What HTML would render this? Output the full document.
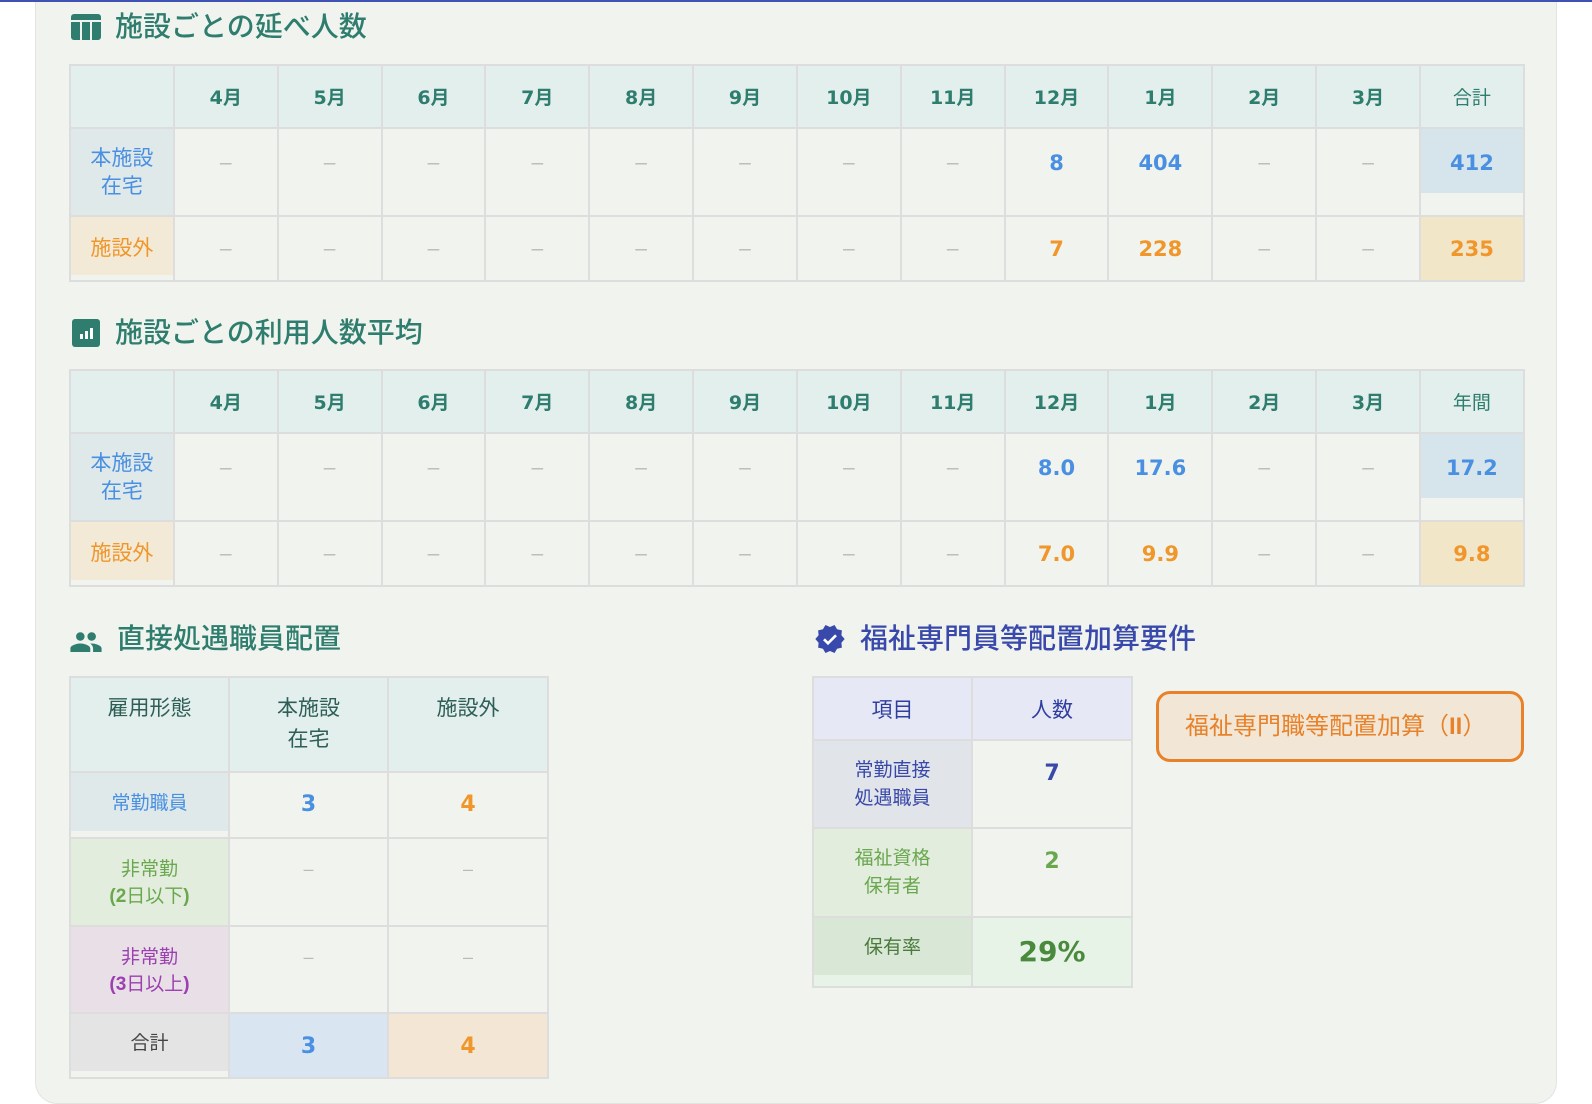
<!DOCTYPE html>
<html><head><meta charset="utf-8"><style>
*{box-sizing:border-box;margin:0;padding:0}
body{width:1592px;height:1088px;background:#fff;position:relative;overflow:hidden;font-family:"Liberation Sans","Noto Sans CJK JP",sans-serif}
.topline{position:absolute;left:0;top:0;width:1592px;height:2px;background:#3f51b5;z-index:5}
.card{position:absolute;left:35px;top:0;width:1522px;height:1104px;background:#f1f4ee;border:1px solid #e2e4e0;border-top:none;border-radius:0 0 22px 22px}
.title{position:absolute;font-size:28px;font-weight:500;color:#2e7d6e;display:flex;align-items:center;gap:14px;line-height:34px;white-space:nowrap}
.title svg{display:block}
table{position:absolute;border-collapse:collapse;table-layout:fixed}
td{border:2px solid #dddddd;text-align:center;vertical-align:top;padding:0}
.m td{font-size:21px}
.m tr.h td{background:#e2efed;color:#2e7d6e;font-weight:bold;vertical-align:middle;font-family:"DejaVu Sans","Noto Sans CJK JP",sans-serif;font-size:19px}
.m .r1 td{padding-top:20px;line-height:28px}
.m .r2 td{vertical-align:middle;line-height:28px}
.lbl{font-size:19px;font-weight:normal}
.dash{color:#bbb;font-size:18px}
.b,.o,.n{font-family:"DejaVu Sans",sans-serif;font-weight:bold;font-size:22px}
.b{color:#4a90e2}
.o{color:#f0962a}
</style></head><body>
<div class="topline"></div>
<div class="card"></div>

<div class="title" style="left:71px;top:10px">
<svg width="30" height="30" viewBox="0 0 30 30"><rect x="0" y="2" width="30" height="26" rx="3" fill="#2e7d6e"/><rect x="9" y="9" width="2" height="19" fill="#f1f4ee"/><rect x="19" y="9" width="2" height="19" fill="#f1f4ee"/><rect x="0" y="8" width="30" height="2" fill="#f1f4ee"/></svg>
<span>施設ごとの延べ人数</span></div>

<table class="m" style="left:69px;top:64px;width:1454px">
<colgroup><col span="14" style="width:103.85px"></colgroup>
<tr class="h" style="height:63px"><td></td><td>4月</td><td>5月</td><td>6月</td><td>7月</td><td>8月</td><td>9月</td><td>10月</td><td>11月</td><td>12月</td><td>1月</td><td>2月</td><td>3月</td><td style="font-weight:normal">合計</td></tr>
<tr class="r1" style="height:88px"><td class="lbl" style="background:#dfe9ea;color:#4a90e2;padding-top:16px">本施設<br>在宅</td><td class="dash">–</td><td class="dash">–</td><td class="dash">–</td><td class="dash">–</td><td class="dash">–</td><td class="dash">–</td><td class="dash">–</td><td class="dash">–</td><td class="b">8</td><td class="b">404</td><td class="dash">–</td><td class="dash">–</td><td class="b" style="background:linear-gradient(#d6e4ec 64px,transparent 0)">412</td></tr>
<tr class="r2" style="height:65px"><td class="lbl" style="background:linear-gradient(#f2ead6 calc(100% - 5px),transparent 0);color:#f0962a">施設外</td><td class="dash">–</td><td class="dash">–</td><td class="dash">–</td><td class="dash">–</td><td class="dash">–</td><td class="dash">–</td><td class="dash">–</td><td class="dash">–</td><td class="o">7</td><td class="o">228</td><td class="dash">–</td><td class="dash">–</td><td class="o" style="background:#f2e6c9">235</td></tr>
</table>

<div class="title" style="left:71px;top:316px">
<svg width="30" height="30" viewBox="0 0 30 30"><rect x="1" y="1" width="28" height="28" rx="3" fill="#2e7d6e"/><rect x="9" y="16" width="3" height="5" fill="#fff"/><rect x="14" y="13" width="3" height="8" fill="#fff"/><rect x="19" y="10" width="3" height="11" fill="#fff"/></svg>
<span>施設ごとの利用人数平均</span></div>

<table class="m" style="left:69px;top:369px;width:1454px">
<colgroup><col span="14" style="width:103.85px"></colgroup>
<tr class="h" style="height:63px"><td></td><td>4月</td><td>5月</td><td>6月</td><td>7月</td><td>8月</td><td>9月</td><td>10月</td><td>11月</td><td>12月</td><td>1月</td><td>2月</td><td>3月</td><td style="font-weight:normal">年間</td></tr>
<tr class="r1" style="height:88px"><td class="lbl" style="background:#dfe9ea;color:#4a90e2;padding-top:16px">本施設<br>在宅</td><td class="dash">–</td><td class="dash">–</td><td class="dash">–</td><td class="dash">–</td><td class="dash">–</td><td class="dash">–</td><td class="dash">–</td><td class="dash">–</td><td class="b">8.0</td><td class="b">17.6</td><td class="dash">–</td><td class="dash">–</td><td class="b" style="background:linear-gradient(#d6e4ec 64px,transparent 0)">17.2</td></tr>
<tr class="r2" style="height:65px"><td class="lbl" style="background:linear-gradient(#f2ead6 calc(100% - 5px),transparent 0);color:#f0962a">施設外</td><td class="dash">–</td><td class="dash">–</td><td class="dash">–</td><td class="dash">–</td><td class="dash">–</td><td class="dash">–</td><td class="dash">–</td><td class="dash">–</td><td class="o">7.0</td><td class="o">9.9</td><td class="dash">–</td><td class="dash">–</td><td class="o" style="background:#f2e6c9">9.8</td></tr>
</table>

<div class="title" style="left:69px;top:622px">
<svg width="34" height="30" viewBox="0 0 24 21" style="margin-top:2px"><path fill="#2e7d6e" d="M16 11c1.66 0 2.99-1.34 2.99-3S17.66 5 16 5c-1.66 0-3 1.34-3 3s1.34 3 3 3zm-8 0c1.66 0 2.99-1.34 2.99-3S9.66 5 8 5C6.34 5 5 6.34 5 8s1.34 3 3 3zm0 2c-2.33 0-7 1.17-7 3.5V19h14v-2.5c0-2.33-4.67-3.5-7-3.5zm8 0c-.29 0-.62.02-.97.05 1.16.84 1.97 1.97 1.97 3.45V19h6v-2.5c0-2.33-4.67-3.5-7-3.5z"/></svg>
<span>直接処遇職員配置</span></div>

<table style="left:69px;top:676px;width:478px;font-size:19px">
<colgroup><col style="width:159px"><col style="width:159px"><col style="width:160px"></colgroup>
<tr style="height:95px"><td style="background:#e2efed;color:#2e5e55;font-size:21px;line-height:31px;padding-top:15px">雇用形態</td><td style="background:#e2efed;color:#2e5e55;font-size:21px;line-height:31px;padding-top:15px">本施設<br>在宅</td><td style="background:#e2efed;color:#2e5e55;font-size:21px;line-height:31px;padding-top:15px">施設外</td></tr>
<tr style="height:66px"><td style="background:linear-gradient(#dfe9ea calc(100% - 6px),transparent 0);color:#4a90e2;padding-top:17px;line-height:28px">常勤職員</td><td class="b" style="padding-top:18px;line-height:28px">3</td><td class="o" style="padding-top:18px;line-height:28px">4</td></tr>
<tr style="height:88px"><td style="background:#e3eddd;color:#6aa84f;padding-top:17px;line-height:27px">非常勤<br><b>(2</b>日以下<b>)</b></td><td class="dash" style="padding-top:20px">–</td><td class="dash" style="padding-top:20px">–</td></tr>
<tr style="height:87px"><td style="background:#e8dfe7;color:#9c3fb0;padding-top:17px;line-height:27px">非常勤<br><b>(3</b>日以上<b>)</b></td><td class="dash" style="padding-top:20px">–</td><td class="dash" style="padding-top:20px">–</td></tr>
<tr style="height:65px"><td style="background:linear-gradient(#e4e4e4 calc(100% - 6px),transparent 0);color:#444;padding-top:16px;line-height:28px">合計</td><td class="b" style="background:#d9e6f2;padding-top:19px;line-height:28px">3</td><td class="o" style="background:#f3e6d4;padding-top:19px;line-height:28px">4</td></tr>
</table>

<div class="title" style="left:814px;top:622px;color:#3949ab">
<svg width="32" height="32" viewBox="0 0 24 24"><path fill="#3949ab" d="M23 12l-2.44-2.79.34-3.69-3.61-.82-1.89-3.2L12 2.96 8.6 1.5 6.71 4.69 3.1 5.5l.34 3.7L1 12l2.44 2.79-.34 3.7 3.61.82L8.6 22.5l3.4-1.47 3.4 1.46 1.89-3.19 3.61-.82-.34-3.69L23 12z"/><path fill="none" stroke="#fff" stroke-width="2" d="M7.5 12.2l3 3 6-6"/></svg>
<span>福祉専門員等配置加算要件</span></div>

<table style="left:812px;top:676px;width:319px;font-size:19px">
<colgroup><col style="width:159px"><col style="width:160px"></colgroup>
<tr style="height:63px"><td style="background:#e6e9f5;color:#303f9f;font-size:21px;vertical-align:middle">項目</td><td style="background:#e6e9f5;color:#303f9f;font-size:21px;vertical-align:middle">人数</td></tr>
<tr style="height:88px"><td style="background:#e1e4e8;color:#3949ab;padding-top:16px;line-height:28px">常勤直接<br>処遇職員</td><td class="n" style="color:#3949ab;padding-top:19px;line-height:28px">7</td></tr>
<tr style="height:89px"><td style="background:#e3eddd;color:#6aa84f;padding-top:16px;line-height:28px">福祉資格<br>保有者</td><td class="n" style="color:#6aa84f;padding-top:19px;line-height:28px">2</td></tr>
<tr style="height:70px"><td style="background:linear-gradient(#d9e8d6 calc(100% - 11px),#e8f3e8 0);color:#4a7a3c;padding-top:16px;line-height:28px">保有率</td><td class="n" style="background:#e8f3e8;color:#4a8a3c;font-size:28px;padding-top:17px;line-height:34px">29%</td></tr>
</table>

<div style="position:absolute;left:1156px;top:691px;width:368px;height:71px;border:3px solid #e8822a;border-radius:14px;background:#f2e7d6;color:#e8822a;font-size:24px;line-height:65px;padding-left:26px;white-space:nowrap">福祉専門職等配置加算（<b>II</b>）</div>
</body></html>
